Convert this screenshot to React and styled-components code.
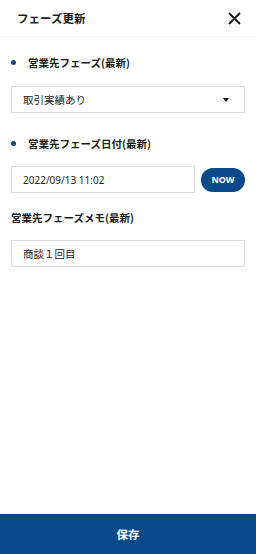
import React, { useState } from "react";
import styled, { createGlobalStyle } from "styled-components";

const GlobalStyle = createGlobalStyle`
  html, body {
    margin: 0;
    padding: 0;
    background: #fff;
  }
  body {
    font-family: "Noto Sans CJK JP", "Noto Sans", sans-serif;
    color: #222;
  }
`;

const Page = styled.div`
  height: 554px;
  display: flex;
  flex-direction: column;
`;

const Header = styled.header`
  height: 37px;
  display: flex;
  align-items: center;
  justify-content: space-between;
  padding: 0 14px 0 17px;
  border-bottom: 1px solid #f0f0f0;
  box-sizing: border-box;
`;

const Title = styled.h1`
  margin: 0;
  font-size: 11.5px;
  font-weight: 700;
  color: #1a1a1a;
`;

const CloseButton = styled.button`
  border: 0;
  background: none;
  padding: 0;
  width: 16px;
  height: 16px;
  display: flex;
  align-items: center;
  justify-content: center;
  cursor: pointer;
`;

const Body = styled.main`
  flex: 1;
  padding: 0 11px;
`;

const Label = styled.div`
  display: flex;
  align-items: center;
  font-size: 10.5px;
  font-weight: 700;
  color: #1a1a1a;
  height: 16px;
  margin-top: ${(p) => p.top}px;

  ${(p) =>
    p.bullet &&
    `
    &::before {
      content: "";
      width: 5px;
      height: 5px;
      border-radius: 50%;
      background: #0a4a88;
      margin: 0 12px 0 0;
      flex-shrink: 0;
    }
  `}
`;

const Field = styled.div`
  height: 27px;
  border: 1px solid #dcdcdc;
  box-sizing: border-box;
  display: flex;
  align-items: center;
  justify-content: space-between;
  padding: 0 15px 0 11px;
  font-size: 10.5px;
  color: #222;
  margin-top: ${(p) => p.top}px;
  flex: 1;
`;

const DateText = styled.span`
  font-family: "Noto Sans", sans-serif;
  font-size: 10px;
`;

const Arrow = styled.span`
  width: 0;
  height: 0;
  border-left: 3.5px solid transparent;
  border-right: 3.5px solid transparent;
  border-top: 4px solid #111;
`;

const Row = styled.div`
  display: flex;
  align-items: center;
  gap: 6px;
  margin-top: ${(p) => p.top}px;
`;

const NowButton = styled.button`
  width: 44px;
  height: 24px;
  border: 0;
  border-radius: 12px;
  background: #0a4a88;
  color: #fff;
  font-family: "Noto Sans", sans-serif;
  font-weight: 700;
  font-size: 9px;
  padding: 0;
  cursor: pointer;
`;

const SaveButton = styled.button`
  height: 40px;
  border: 0;
  background: #0a4a88;
  color: #fff;
  font-family: "Noto Sans CJK JP", sans-serif;
  font-size: 11.5px;
  font-weight: 700;
  width: 100%;
  cursor: pointer;
`;

const App = () => {
  const [date, setDate] = useState("2022/09/13 11:02");

  const setNow = () => {
    const d = new Date();
    const pad = (n) => String(n).padStart(2, "0");
    setDate(
      `${d.getFullYear()}/${pad(d.getMonth() + 1)}/${pad(d.getDate())} ${pad(
        d.getHours()
      )}:${pad(d.getMinutes())}`
    );
  };

  return (
    <Page>
      <GlobalStyle />
      <Header>
        <Title>フェーズ更新</Title>
        <CloseButton aria-label="close">
          <svg width="13" height="13" viewBox="0 0 13 13">
            <path d="M1 1L12 12M12 1L1 12" stroke="#111" strokeWidth="1.8" />
          </svg>
        </CloseButton>
      </Header>
      <Body>
        <Label bullet top={17}>営業先フェーズ(最新)</Label>
        <Field top={16}>
          <span>取引実績あり</span>
          <Arrow />
        </Field>
        <Label bullet top={22}>営業先フェーズ日付(最新)</Label>
        <Row top={15}>
          <Field top={0}>
            <DateText>{date}</DateText>
          </Field>
          <NowButton onClick={setNow}>NOW</NowButton>
        </Row>
        <Label top={16}>営業先フェーズメモ(最新)</Label>
        <Field top={15}>商談１回目</Field>
      </Body>
      <SaveButton>保存</SaveButton>
    </Page>
  );
};

export default App;
